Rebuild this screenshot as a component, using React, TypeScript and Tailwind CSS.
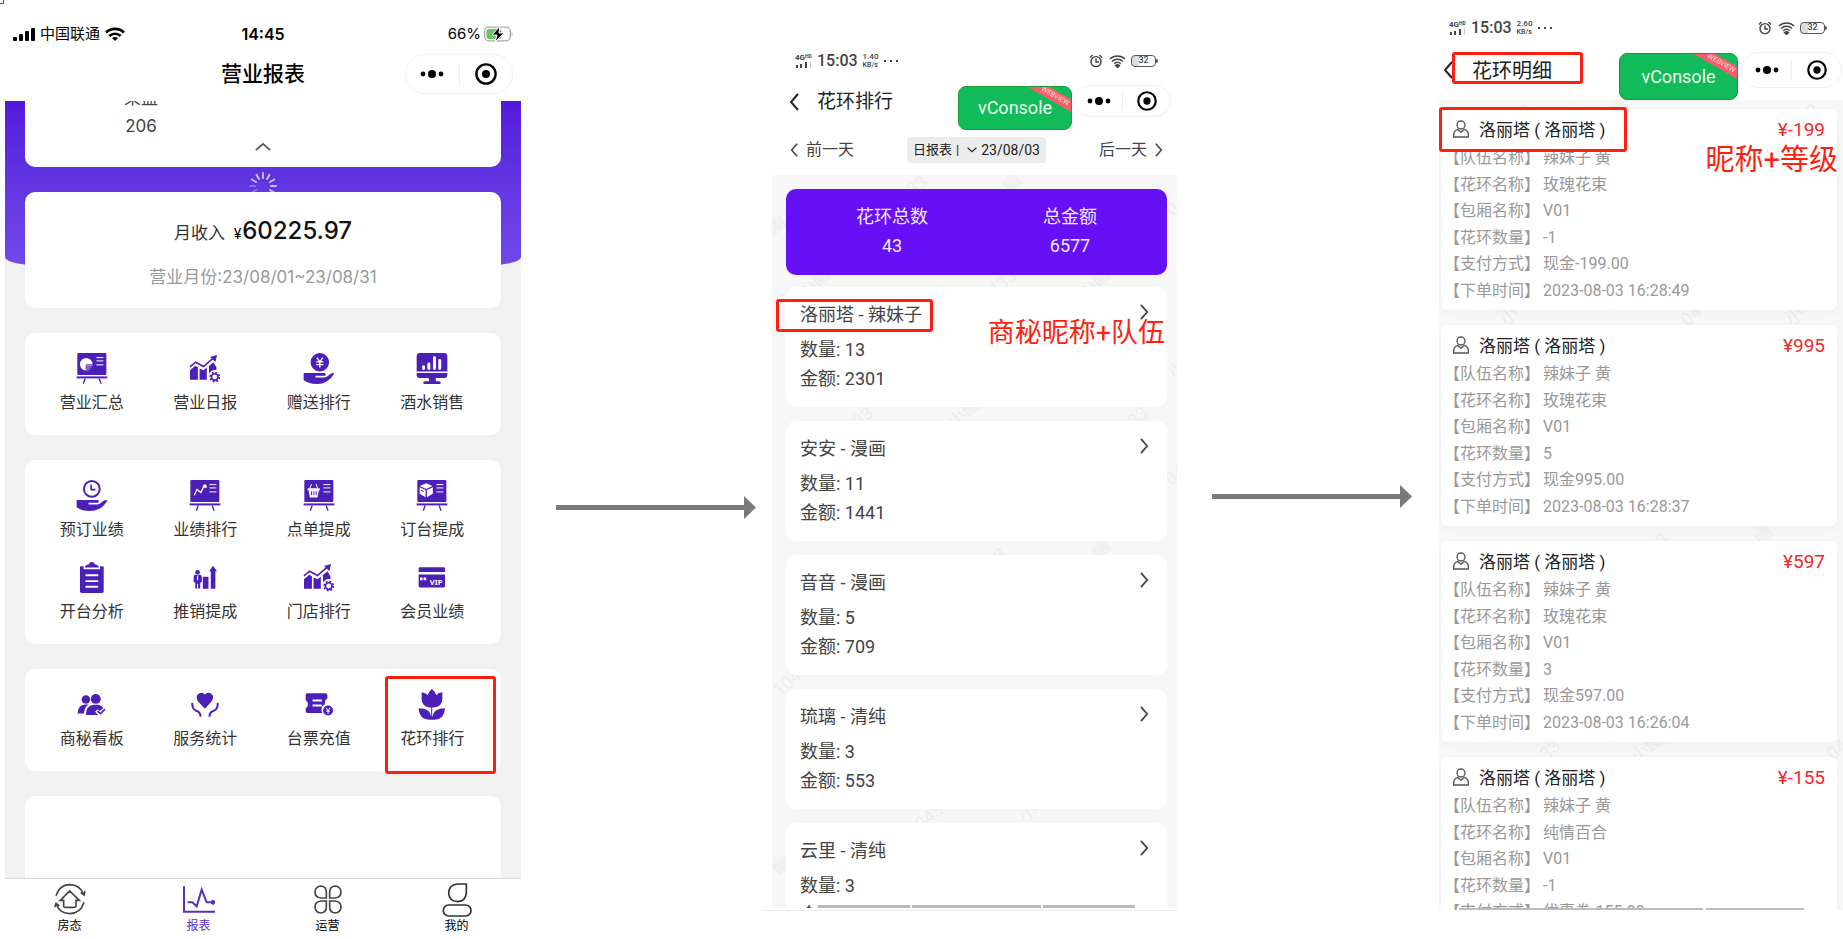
import type { ReactNode } from "react";

type Watermark = { text: string; left: string; top: string };

const PURPLE = "#4b1fb8";

const summary = [
  { label: "营业汇总", icon: <BoardIcon kind="pie" /> },
  { label: "营业日报", icon: <TrendIcon /> },
  { label: "赠送排行", icon: <HandIcon kind="yen" /> },
  { label: "酒水销售", icon: <MonitorIcon /> },
];

const performance = [
  { label: "预订业绩", icon: <HandIcon kind="clock" /> },
  { label: "业绩排行", icon: <BoardIcon kind="line" /> },
  { label: "点单提成", icon: <BoardIcon kind="basket" /> },
  { label: "订台提成", icon: <BoardIcon kind="box" /> },
  { label: "开台分析", icon: <ClipboardIcon /> },
  { label: "推销提成", icon: <PromoteIcon /> },
  { label: "门店排行", icon: <TrendIcon /> },
  { label: "会员业绩", icon: <VipIcon /> },
];

const services = [
  { label: "商秘看板", icon: <PeopleIcon /> },
  { label: "服务统计", icon: <CareIcon /> },
  { label: "台票充值", icon: <TicketIcon /> },
  { label: "花环排行", icon: <TulipIcon />, marked: true },
];

const tabs = [
  { label: "房态", icon: <HouseTabIcon /> },
  { label: "报表", icon: <ReportTabIcon />, active: true },
  { label: "运营", icon: <CloverTabIcon /> },
  { label: "我的", icon: <MineTabIcon /> },
];

const ranking = [
  { name: "洛丽塔 - 辣妹子", count: 13, amount: 2301, marked: true },
  { name: "安安 - 漫画", count: 11, amount: 1441 },
  { name: "音音 - 漫画", count: 5, amount: 709 },
  { name: "琉璃 - 清纯", count: 3, amount: 553 },
  { name: "云里 - 清纯", count: 3, amount: 553 },
];

const orders = [
  { price: "¥-199", wreath: "玫瑰花束", count: "-1", pay: "现金-199.00", time: "2023-08-03 16:28:49", marked: true },
  { price: "¥995", wreath: "玫瑰花束", count: "5", pay: "现金995.00", time: "2023-08-03 16:28:37" },
  { price: "¥597", wreath: "玫瑰花束", count: "3", pay: "现金597.00", time: "2023-08-03 16:26:04" },
  { price: "¥-155", wreath: "纯情百合", count: "-1", pay: "优惠券-155.00", time: "2023-08-03 16:25:12" },
];

const rankingMarks: Watermark[] = [
  { text: "433", left: "31%", top: "4px" },
  { text: "幽", left: "57%", top: "-2px" },
  { text: "043", left: "97%", top: "18px" },
  { text: "幽", left: "-1%", top: "40px" },
  { text: "小幽", left: "6%", top: "98px" },
  { text: "433", left: "53%", top: "98px" },
  { text: "小幽", left: "75%", top: "98px" },
  { text: "33", left: "20%", top: "232px" },
  { text: "小幽", left: "43%", top: "228px" },
  { text: "33", left: "88%", top: "232px" },
  { text: "小", left: "98%", top: "185px" },
  { text: "04", left: "97%", top: "290px" },
  { text: "3", left: "55%", top: "370px" },
  { text: "幽", left: "79%", top: "364px" },
  { text: "104", left: "0%", top: "498px" },
  { text: "043", left: "35%", top: "632px" },
  { text: "小", left: "61%", top: "628px" },
  { text: "幽", left: "0%", top: "680px" },
];

const orderMarks: Watermark[] = [
  { text: "33", left: "18%", top: "4px" },
  { text: "幽", left: "42%", top: "-2px" },
  { text: "33", left: "89%", top: "4px" },
  { text: "小", left: "15%", top: "206px" },
  { text: "04", left: "60%", top: "206px" },
  { text: "小", left: "86%", top: "206px" },
  { text: "3", left: "54%", top: "430px" },
  { text: "幽", left: "78%", top: "424px" },
  { text: "33", left: "25%", top: "640px" },
  { text: "小幽", left: "47%", top: "638px" },
  { text: "04", left: "96%", top: "640px" },
];

function BoardIcon({ kind }: { kind: "pie" | "line" | "basket" | "box" }) {
  return (
    <svg viewBox="0 0 93 94" className="size-full" fill="none" aria-hidden="true">
      <rect x="2" width="88" height="67" rx="3" fill={PURPLE} />
      <path d="M0 74h93" stroke={PURPLE} strokeWidth="6" />
      <path d="M26 77l-6 16M68 77l6 16" stroke={PURPLE} strokeWidth="4" />
      <path d="M60 14h21M60 24h21M60 36h21" stroke="#fff" strokeWidth="3" />
      {kind === "pie" && (
        <>
          <circle cx="29" cy="34" r="19" fill="#fff" />
          <path d="M29 54V36h20" stroke={PURPLE} strokeWidth="3" />
          <path d="M32 52V39h16q-2 11-16 13z" fill={PURPLE} />
          <path d="M33 49v-9h13q-3 7-13 9z" fill="#fff" opacity=".35" />
        </>
      )}
      {kind === "line" && (
        <>
          <path d="M14 46l8-17 12 9 9-19" stroke="#fff" strokeWidth="4" />
          <circle cx="46" cy="19" r="6" fill="#fff" />
        </>
      )}
      {kind === "basket" && (
        <>
          <path d="M12 25h37v6h-3l-4 22H19l-4-22h-3z" fill="#fff" />
          <path d="M19 24l5-12M42 24l-5-12" stroke="#fff" strokeWidth="3" />
          <path d="M24 34v12M31 34v12M38 34v12" stroke={PURPLE} strokeWidth="3" />
        </>
      )}
      {kind === "box" && (
        <>
          <path d="M29 10l19 8-19 9-20-9zM9 22l18 8v22L9 42zM49 22l-18 8v22l18-10z" fill="#fff" />
          <path d="M13 31l8 4" stroke={PURPLE} strokeWidth="3" />
        </>
      )}
    </svg>
  );
}

function TrendIcon() {
  return (
    <svg viewBox="0 0 93 94" className="size-full" fill="none" aria-hidden="true">
      <path d="M1 42l17-14 24 13 31-27" stroke={PURPLE} strokeWidth="5" />
      <path d="M83 6L62 12l16 15z" fill={PURPLE} />
      <path d="M1 52l16-13 8 4v38H1zM30 47l12 5 10-8v37H30zM58 40l14-12 9 15v9a22 22 0 0 0-22 10z" fill={PURPLE} />
      <circle cx="76" cy="73" r="10" stroke={PURPLE} strokeWidth="5" />
      <circle cx="76" cy="73" r="14" stroke={PURPLE} strokeWidth="5" strokeDasharray="5.5 5.5" />
    </svg>
  );
}

function HandIcon({ kind }: { kind: "yen" | "clock" }) {
  return (
    <svg viewBox="0 0 93 94" className="size-full" fill="none" aria-hidden="true">
      <path d="M0 61h64q5 3 2 8H36v5h26q7 0 12-5l9-7q8-3 10 0Q75 94 40 94 15 94 0 83z" fill={PURPLE} />
      {kind === "yen" ? (
        <>
          <circle cx="49" cy="28" r="28" fill={PURPLE} />
          <path d="M40 14l9 13 9-13M49 27v17M38 27h22M38 35h22" stroke="#fff" strokeWidth="4" />
        </>
      ) : (
        <>
          <circle cx="46" cy="27" r="24" stroke={PURPLE} strokeWidth="6" />
          <path d="M44 14v15h13" stroke={PURPLE} strokeWidth="5" />
        </>
      )}
    </svg>
  );
}

function MonitorIcon() {
  return (
    <svg viewBox="0 0 93 94" className="size-full" fill={PURPLE} aria-hidden="true">
      <path d="M10 0h73q10 0 10 10v46H0V10Q0 0 10 0zM0 61h93v6q0 9-9 9H58v10h10q5 0 5 4t-4 4H24q-4 0-4-4t4-4h13V76H9q-9 0-9-9z" />
      <path d="M21 42v5M37 33v14M54 14v33M70 23v24" stroke="#fff" strokeWidth="9" strokeLinecap="round" />
    </svg>
  );
}

function ClipboardIcon() {
  return (
    <svg viewBox="0 0 93 94" className="size-full" fill="none" aria-hidden="true">
      <path d="M13 13h8v9h50v-9h8q3 0 3 4v72q0 5-5 5H15q-5 0-5-5V17q0-4 3-4z" fill={PURPLE} />
      <path d="M25 17q0-8 12-10 2-7 9-7t9 7q12 2 12 10z" fill={PURPLE} />
      <path d="M29 40h34M29 58h34M29 75h34" stroke="#fff" strokeWidth="6" strokeLinecap="round" />
    </svg>
  );
}

function PromoteIcon() {
  return (
    <svg viewBox="0 0 93 94" className="size-full" fill={PURPLE} aria-hidden="true">
      <circle cx="24" cy="31" r="7" />
      <path d="M17 39h14q6 1 6 8v14l-5 2v17H17V63l-5-2V47q0-7 5-8z" />
      <path d="M24 41v14M24 66v14" stroke="#fff" strokeWidth="3" />
      <path d="M40 45h17v36H40zM64 81V28h-5l12-17 12 17h-5v53z" />
    </svg>
  );
}

function VipIcon() {
  return (
    <svg viewBox="0 0 93 94" className="size-full" fill={PURPLE} aria-hidden="true">
      <path d="M6 19q0-3 3-3h74q3 0 3 3v11H6zM6 38h80v35q0 4-4 4H10q-4 0-4-4z" />
      <path d="M10 47h8v8h-8zM21 47h8v8h-8z" fill="#fff" />
      <text x="40" y="70" fill="#fff" fontSize="23" fontWeight="700" fontFamily="Noto Sans, sans-serif">
        VIP
      </text>
    </svg>
  );
}

function PeopleIcon() {
  return (
    <svg viewBox="0 0 93 94" className="size-full" fill={PURPLE} aria-hidden="true">
      <circle cx="28" cy="32" r="13" />
      <path d="M3 74q0-24 21-27h12Q24 54 22 74z" />
      <circle cx="58" cy="30" r="15" />
      <path d="M28 79q0-28 23-31h14q12 2 15 10l-10 9-7-5-7 7 9 10z" />
      <path d="M63 67l9 8 14-14" stroke={PURPLE} strokeWidth="5" fill="none" />
    </svg>
  );
}

function CareIcon() {
  return (
    <svg viewBox="0 0 93 94" className="size-full" fill="none" aria-hidden="true">
      <path d="M46 60L25 37q-9-15 3-23 11-6 18 3 8-9 19-3 11 8 2 23z" fill={PURPLE} />
      <path d="M8 42q-1 18 10 23 15 3 15 19M85 42q1 18-10 23-15 3-15 19" stroke={PURPLE} strokeWidth="6" />
    </svg>
  );
}

function TicketIcon() {
  return (
    <svg viewBox="0 0 93 94" className="size-full" fill="none" aria-hidden="true">
      <path d="M12 13h54q6 0 6 6v10q-8 4-8 14v4q-10 4-10 16 0 6 3 10H12q-6 0-6-6V58q7-4 7-12T6 33V19q0-6 6-6z" fill={PURPLE} />
      <path d="M27 35h28M27 50h28" stroke="#fff" strokeWidth="6" />
      <circle cx="74" cy="65" r="15" fill={PURPLE} />
      <path d="M68 57l6 9 6-9M74 66v9M68 67h12" stroke="#fff" strokeWidth="3" />
    </svg>
  );
}

function TulipIcon() {
  return (
    <svg viewBox="0 0 93 94" className="size-full" fill={PURPLE} aria-hidden="true">
      <path d="M46 0q10 7 13 18 8-7 19-8v20q0 23-27 26h-4v30q3-28 39-28-2 34-32 35H40Q8 93 6 58q36 0 38 28V56h-3Q15 53 15 30V10q10 1 18 8Q37 6 46 0z" />
    </svg>
  );
}

function HouseTabIcon() {
  return (
    <svg viewBox="0 0 96 96" className="size-8" fill="none" stroke="#444" strokeWidth="5" aria-hidden="true">
      <path d="M6 38Q16 6 47 5q30 0 42 29M90 58Q80 91 48 92 18 92 6 63" />
      <path d="M80 28l10 8 3-12M2 73l4-12 10 8M19 52l28-28 29 28H66v18q0 3-4 3H33q-4 0-4-3V52z" />
    </svg>
  );
}

function ReportTabIcon() {
  return (
    <svg viewBox="0 0 96 96" className="size-8" fill="none" stroke="#5a2fc0" strokeWidth="6" aria-hidden="true">
      <path d="M3 10v76h93M14 58h14l13 12 15-50 15 38h18" />
      <circle cx="90" cy="58" r="4" fill="#5a2fc0" />
    </svg>
  );
}

function CloverTabIcon() {
  return (
    <svg viewBox="0 0 96 96" className="size-8" fill="none" stroke="#444" strokeWidth="5" aria-hidden="true">
      <path d="M43 45H27Q9 43 9 27 10 10 27 9q16 2 16 18zM53 45h16q18-2 18-18Q86 10 69 9q-16 2-16 18zM43 54H27Q9 56 9 72q1 17 18 18 16-2 16-18zM53 54h16q18 2 18 18-1 17-18 18-16-2-16-18z" />
    </svg>
  );
}

function MineTabIcon() {
  return (
    <svg viewBox="0 0 96 102" className="h-[34px] w-8" fill="none" stroke="#333" strokeWidth="5" aria-hidden="true">
      <path d="M76 3v26q-2 26-26 27Q24 54 23 30 24 4 50 3z" />
      <rect x="7" y="66" width="83" height="33" rx="16" />
    </svg>
  );
}

function Chevron({ dir, className }: { dir: "left" | "right" | "up" | "down"; className: string }) {
  const d = { left: "M9 1L2 9l7 8", right: "M1 1l7 8-7 8", up: "M1 9l8-7 8 7", down: "M1 1l8 7 8-7" }[dir];
  const box = dir === "left" || dir === "right" ? "0 0 10 18" : "0 0 18 10";
  return (
    <svg viewBox={box} className={className} fill="none" stroke="currentColor" strokeWidth="2" aria-hidden="true">
      <path d={d} />
    </svg>
  );
}

function Capsule({ className, target }: { className: string; target: string }) {
  return (
    <div className={`flex items-center rounded-full border border-[#f1f1f1] bg-white ${className}`}>
      <button type="button" aria-label="更多" className="flex flex-1 justify-center">
        <svg viewBox="0 0 24 10" className="w-6">
          <circle cx="3" cy="5" r="2.4" />
          <circle cx="12" cy="5" r="4" />
          <circle cx="21" cy="5" r="2.4" />
        </svg>
      </button>
      <span className="h-3/5 w-px bg-[#ededed]" />
      <button type="button" aria-label="关闭" className="flex flex-1 justify-center">
        <svg viewBox="0 0 22 22" className={target}>
          <circle cx="11" cy="11" r="9.6" fill="none" stroke="#000" strokeWidth="2.4" />
          <circle cx="11" cy="11" r="4" />
        </svg>
      </button>
    </div>
  );
}

function MenuCard({ items }: { items: { label: string; icon: ReactNode; marked?: boolean }[] }) {
  return (
    <section className="mx-5 mt-[25px] grid shrink-0 grid-cols-4 rounded-[10px] bg-white pt-5 pr-3 pl-2.5">
      {items.map((item) => (
        <button key={item.label} type="button" className="relative mb-[21px] flex flex-col items-center">
          <span className="block size-8 pb-px">{item.icon}</span>
          <span className="mt-[5px] text-base leading-6 text-[#333]">{item.label}</span>
          {item.marked && (
            <span className="absolute -top-[13px] -right-[7px] -bottom-6 left-[9px] rounded-[3px] border-3 border-[#ff1f10]" />
          )}
        </button>
      ))}
    </section>
  );
}

function ReportPhone() {
  return (
    <div className="flex min-h-0 min-w-0 flex-col bg-white font-['Inter','Noto_Sans_CJK_SC',sans-serif]">
      <header className="pb-[7px]">
        <div className="mt-[22px] grid h-5 grid-cols-[1fr_auto_1fr] items-center px-2 text-[15px]">
          <div className="flex items-center gap-[5px]">
            <svg viewBox="0 0 22 13" className="h-[13px] w-[22px]" aria-hidden="true">
              <rect y="9" width="4" height="4" rx="1" />
              <rect x="6" y="6" width="4" height="7" rx="1" />
              <rect x="12" y="3" width="4" height="10" rx="1" />
              <rect x="18" width="4" height="13" rx="1" />
            </svg>
            <span>中国联通</span>
            <svg viewBox="0 0 20 15" className="h-[15px] w-5" fill="none" stroke="#000" strokeWidth="2.6" aria-hidden="true">
              <path d="M1 5.5a13 13 0 0 1 18 0M4.400 9a8 8 0 0 1 11.200 0" />
              <path d="M10 14l-3-3q3-2 6 0z" fill="#000" stroke="none" />
            </svg>
          </div>
          <span className="text-base font-semibold">14:45</span>
          <div className="flex items-center justify-end gap-[3px]">
            <span>66%</span>
            <svg viewBox="0 0 29 16" className="h-4 w-[29px]" aria-hidden="true">
              <rect x=".7" y="1.2" width="25.600" height="13.600" rx="4" fill="none" stroke="#aaa" strokeWidth="1.3" />
              <rect x="2.5" y="3" width="15" height="10" rx="2.5" fill="#65c466" />
              <path d="M27.600 5.500q1.800 2.500 0 5z" fill="#999" />
              <path d="M16 0L8 9h5l-2 7 9-9h-5z" stroke="#fff" strokeWidth="1" />
            </svg>
          </div>
        </div>
        <div className="mt-3 grid grid-cols-[1fr_auto_1fr] items-center px-2">
          <span />
          <h1 className="text-[21px] leading-10 font-medium text-black">营业报表</h1>
          <Capsule className="h-10 w-[108px] justify-self-end" target="w-[22px]" />
        </div>
      </header>

      <div className="relative flex flex-1 flex-col overflow-hidden bg-[#f1f1f1]">
        <div className="absolute inset-x-0 top-0 h-[165px] bg-linear-to-b from-[#5419da] to-[#7049e8] [border-radius:0_0_40px_40px/0_0_9px_9px]" />
        <section className="relative mx-5 shrink-0 rounded-b-[10px] bg-white pb-4">
          <dl className="-mt-[15px] w-1/2 pr-1.5 text-center text-[17px] leading-6 text-[#444]">
            <dt>果盘</dt>
            <dd className="mt-1">206</dd>
          </dl>
          <button type="button" aria-label="收起" className="mx-auto mt-1 flex text-[#555]">
            <Chevron dir="up" className="h-[9px] w-4" />
          </button>
        </section>
        <svg
          viewBox="-14 -14 28 28"
          className="absolute top-[71px] left-1/2 size-7 -translate-x-1/2"
          stroke="#d8cdf8"
          strokeWidth="2"
          strokeLinecap="round"
          aria-hidden="true"
        >
          {[0, 30, 60, 90, 120, 150, 180, 210, 240, 270, 300, 330].map((deg) => (
            <path key={deg} d="M0-8v-5" transform={`rotate(${deg})`} opacity={deg > 180 && deg < 300 ? 0.4 : 0.9} />
          ))}
        </svg>
        <section className="relative mx-5 mt-[25px] shrink-0 rounded-[10px] bg-white pt-[23px] pb-[18px] text-center">
          <p className="text-[17px] leading-8 text-[#333]">
            月收入 <span className="ml-1 text-sm text-black">¥</span>{" "}
            <strong className="-ml-1 text-2xl leading-8 font-medium text-[#111]">60225.97</strong>
          </p>
          <p className="mt-[15px] text-[17px] leading-[26px] text-[#999]">营业月份:23/08/01~23/08/31</p>
        </section>
        <MenuCard items={summary} />
        <MenuCard items={performance} />
        <MenuCard items={services} />
        <section className="mx-5 mt-[25px] flex-1 rounded-t-[10px] bg-white" />
      </div>

      <nav className="grid h-[61px] grid-cols-4 border-t border-[#d8d8d8]">
        {tabs.map((tab) => (
          <a
            key={tab.label}
            href="#"
            className={`flex flex-col items-center pt-1 text-xs leading-[18px] ${tab.active ? "text-[#5a2fc0]" : "text-black"}`}
          >
            <span className="h-[34px]">{tab.icon}</span>
            {tab.label}
          </a>
        ))}
      </nav>
    </div>
  );
}

function AndroidStatus({ speed, className }: { speed: string; className: string }) {
  return (
    <div className={`flex h-5 items-center text-[#444] ${className}`}>
      <div className="w-[17px] text-[8px] leading-[7px] font-bold">
        4G<sup className="text-[5px]">HD</sup>
        <svg viewBox="0 0 17 7" className="h-[7px] w-[17px]" fill="#444" aria-hidden="true">
          <path d="M1 4h2v3H1zM5 3h2v4H5zM10 1h2v6h-2z" />
          <path d="M15 0h1v7h-1z" fill="#ccc" />
        </svg>
      </div>
      <span className="ml-[5px] text-base font-medium">15:03</span>
      <span className="ml-[5px] text-[8px] leading-[8px] font-medium">
        {speed}
        <br />
        <span className="text-[7px]">KB/s</span>
      </span>
      <svg viewBox="0 0 14 4" className="ml-1.5 w-3.5" fill="#444" aria-hidden="true">
        <path d="M0 1h2v2H0zM6 1h2v2H6zM12 1h2v2h-2z" />
      </svg>
      <svg viewBox="0 0 14 14" className="ml-auto size-3.5" fill="none" stroke="#444" strokeWidth="1.4" aria-hidden="true">
        <circle cx="7" cy="7.6" r="5" />
        <path d="M7 4.500V8h3M1 3.500L3.500 1M13 3.500L10.500 1" />
      </svg>
      <svg viewBox="0 0 18 13" className="ml-1.5 h-[13px] w-[18px]" fill="none" stroke="#444" strokeWidth="1.4" aria-hidden="true">
        <path d="M1 4a11 11 0 0 1 15 0M3 6.400a8 8 0 0 1 11 0M5.200 8.800a5 5 0 0 1 6.600 0" />
        <path d="M8.500 12.500l-2-2q2-1.500 4 0z" fill="#444" />
      </svg>
      <div className="ml-1 flex h-[12px] w-[25px] items-center justify-center rounded-[4px] border border-[#555] bg-linear-to-r from-[#ddd] from-30% to-white to-30% text-[9px] font-medium">
        32
      </div>
      <span className="h-1 w-0.5 rounded-r bg-[#555]" />
    </div>
  );
}

function VConsole({ className }: { className: string }) {
  return (
    <button
      type="button"
      className={`relative flex items-center justify-center overflow-hidden rounded-lg border border-[#1d9a2c] bg-[#12bb59] text-lg text-[#e9fbef] ${className}`}
    >
      vConsole
      <span className="absolute top-1 -right-4 w-16 rotate-30 bg-[#f2606c] text-center text-[7px] leading-[11px] text-[#ffd9dc]">
        WEBVIEW
      </span>
    </button>
  );
}

function Watermarks({ marks }: { marks: Watermark[] }) {
  return (
    <div className="absolute inset-0 text-lg leading-5 text-[#ededed]" aria-hidden="true">
      {marks.map((mark, index) => (
        <span key={index} className="absolute -rotate-40" style={{ left: mark.left, top: mark.top }}>
          {mark.text}
        </span>
      ))}
    </div>
  );
}

function RankingPhone() {
  return (
    <div className="flex min-h-0 min-w-0 flex-col pb-7">
      <AndroidStatus speed="1.40" className="mt-[51px] shrink-0 pr-[19px] pl-[23px]" />
      <div className="mt-3.5 flex shrink-0 items-start pr-1.5 pl-[17px] text-[#222]">
        <a href="#" aria-label="返回" className="flex h-[34px] items-center">
          <Chevron dir="left" className="h-[18px] w-2.5" />
        </a>
        <h2 className="ml-[18px] text-[19px] leading-[34px]">花环排行</h2>
        <VConsole className="mt-px ml-auto h-11 w-[114px]" />
        <Capsule className="ml-0.5 h-8 w-[97px]" target="w-5" />
      </div>
      <div className="mt-[7px] flex shrink-0 items-center justify-between pr-[14px] pb-3 pl-[18px] text-[#444]">
        <button type="button" className="flex items-center gap-2 text-base leading-[26px]">
          <Chevron dir="left" className="h-3.5 w-2" />
          前一天
        </button>
        <button type="button" className="flex items-center rounded bg-[#ececec] px-1.5 text-[13px] leading-[26px] text-[#222]">
          日报表 <span className="mx-1">|</span>
          <Chevron dir="down" className="mx-1 h-1.5 w-2.5" />
          <span className="text-sm leading-[26px]">23/08/03</span>
        </button>
        <button type="button" className="flex items-center gap-2 text-base leading-[26px]">
          后一天
          <Chevron dir="right" className="h-3.5 w-2" />
        </button>
      </div>

      <div className="relative flex-1 overflow-hidden bg-[#f7f7f7] pr-2.5 pl-3.5">
        <Watermarks marks={rankingMarks} />
        <dl className="relative mt-3.5 flex justify-between rounded-[10px] bg-[#6610f5] px-[70px] pt-3.5 pb-[15px] text-center text-lg text-[#f1eaff]">
          <div>
            <dt className="leading-7">花环总数</dt>
            <dd className="leading-[29px]">43</dd>
          </div>
          <div>
            <dt className="leading-7">总金额</dt>
            <dd className="leading-[29px]">6577</dd>
          </div>
        </dl>
        <ul className="relative mt-3 flex flex-col gap-3.5 text-lg text-[#444]">
          {ranking.map((row) => (
            <li key={row.name} className="relative rounded-[10px] bg-white p-3.5">
              <h3 className="leading-7">{row.name}</h3>
              <p className="mt-1.5 leading-[29px]">数量: {row.count}</p>
              <p className="leading-[29px]">金额: {row.amount}</p>
              <a href="#" aria-label={row.name} className="absolute top-[17px] right-[18px]">
                <Chevron dir="right" className="h-4 w-[9px]" />
              </a>
              {row.marked && (
                <>
                  <span className="absolute top-3 -left-2.5 h-[33px] w-[157px] rounded-[3px] border-3 border-[#ff1f10]" />
                  <strong className="absolute top-7 right-0.5 text-[27px] leading-9 font-normal text-[#ff1f10]">
                    商秘昵称+队伍
                  </strong>
                </>
              )}
            </li>
          ))}
        </ul>
        <div className="absolute right-[42px] bottom-0 left-[46px] flex h-[3px] gap-0.5">
          <span className="flex-5 bg-[#bbb]" />
          <span className="flex-7 bg-[#bbb]" />
          <span className="flex-5 bg-[#bbb]" />
        </div>
      </div>
      <div className="mt-0.5 -ml-[9px] border-t border-[#eee]" />
    </div>
  );
}

function DetailRow({ label, children }: { label: string; children: ReactNode }) {
  return (
    <li className="flex gap-[3px]">
      <span>【{label}】</span>
      <span>{children}</span>
    </li>
  );
}

function DetailPhone() {
  return (
    <div className="flex min-h-0 min-w-0 flex-col pb-[29px]">
      <AndroidStatus speed="2.60" className="mt-[18px] shrink-0 pr-4 pl-2.5" />
      <div className="mt-3.5 flex shrink-0 items-start pr-px pl-1 text-[#222]">
        <a href="#" aria-label="返回" className="flex h-9 items-center">
          <Chevron dir="left" className="h-[18px] w-2.5" />
        </a>
        <h2 className="relative -ml-px h-8 w-[131px] rounded-[3px] border-3 border-[#ff1f10] bg-white pl-[17px] text-xl leading-8">
          花环明细
        </h2>
        <VConsole className="mt-px ml-auto h-[47px] w-[119px]" />
        <Capsule className="ml-[3px] h-9 w-[101px]" target="w-5" />
      </div>

      <div className="relative flex-1 overflow-hidden bg-[#f8f8f8] pt-[9px] pr-1.5 pl-0.5">
        <Watermarks marks={orderMarks} />
        <div className="relative flex flex-col gap-[15px]">
          {orders.map((order) => (
            <article
              key={order.time}
              className="relative flex h-[201px] shrink-0 flex-col rounded-md bg-white pr-3 pb-[7px] pl-[3px] shadow-[0_3px_8px_rgba(0,0,0,0.04)]"
            >
              <header className="flex h-[37px] items-start pt-2 pl-[9px]">
                <svg viewBox="0 0 48 54" className="mt-[3px] h-[18px] w-4" fill="none" stroke="#555" strokeWidth="4" aria-hidden="true">
                  <circle cx="24" cy="15" r="12" />
                  <path d="M14 28Q2 32 2 45v6h44v-6q0-13-12-17l-10 9z" />
                </svg>
                <h3 className="ml-[10px] text-[17px] leading-[26px] text-[#222]">洛丽塔 ( 洛丽塔 )</h3>
                <span className="ml-auto text-[19px] leading-[26px] text-[#f0282d]">{order.price}</span>
              </header>
              <ul className="flex flex-1 flex-col justify-between text-base leading-6 text-[#999]">
                <DetailRow label="队伍名称">辣妹子 黄</DetailRow>
                <DetailRow label="花环名称">{order.wreath}</DetailRow>
                <DetailRow label="包厢名称">V01</DetailRow>
                <DetailRow label="花环数量">{order.count}</DetailRow>
                <DetailRow label="支付方式">{order.pay}</DetailRow>
                <DetailRow label="下单时间">{order.time}</DetailRow>
              </ul>
              {order.marked && (
                <>
                  <span className="absolute -top-0.5 -left-0.5 h-[45px] w-[188px] rounded-[3px] border-3 border-[#ff1f10]" />
                  <strong className="absolute top-[33px] -right-px text-[29px] leading-9 font-normal text-[#ff1f10]">
                    昵称+等级
                  </strong>
                </>
              )}
            </article>
          ))}
        </div>
        <div className="absolute right-[39px] bottom-0 left-5 flex h-0.5 gap-[3px]">
          <span className="flex-5 bg-[#bbb]" />
          <span className="flex-2 bg-[#bbb]" />
        </div>
      </div>
    </div>
  );
}

function FlowArrow() {
  return (
    <svg viewBox="0 0 200 23" className="w-full" fill="#7a7a7a" aria-hidden="true">
      <path d="M0 9h188V0l12 11.500L188 23v-9H0z" />
    </svg>
  );
}

export default function App() {
  return (
    <main className="relative grid h-screen grid-cols-[516fr_251fr_405fr_262fr_404fr] grid-rows-[minmax(0,1fr)] overflow-hidden bg-white pl-[5px] font-['Roboto','Noto_Sans_CJK_SC',sans-serif]">
      <span className="absolute top-0 left-0 size-1 border-r border-b border-[#555]" />
      <ReportPhone />
      <div className="pt-[496px] pr-4 pl-[35px]">
        <FlowArrow />
      </div>
      <RankingPhone />
      <div className="pt-[485px] pr-[27px] pl-[35px]">
        <FlowArrow />
      </div>
      <DetailPhone />
    </main>
  );
}
